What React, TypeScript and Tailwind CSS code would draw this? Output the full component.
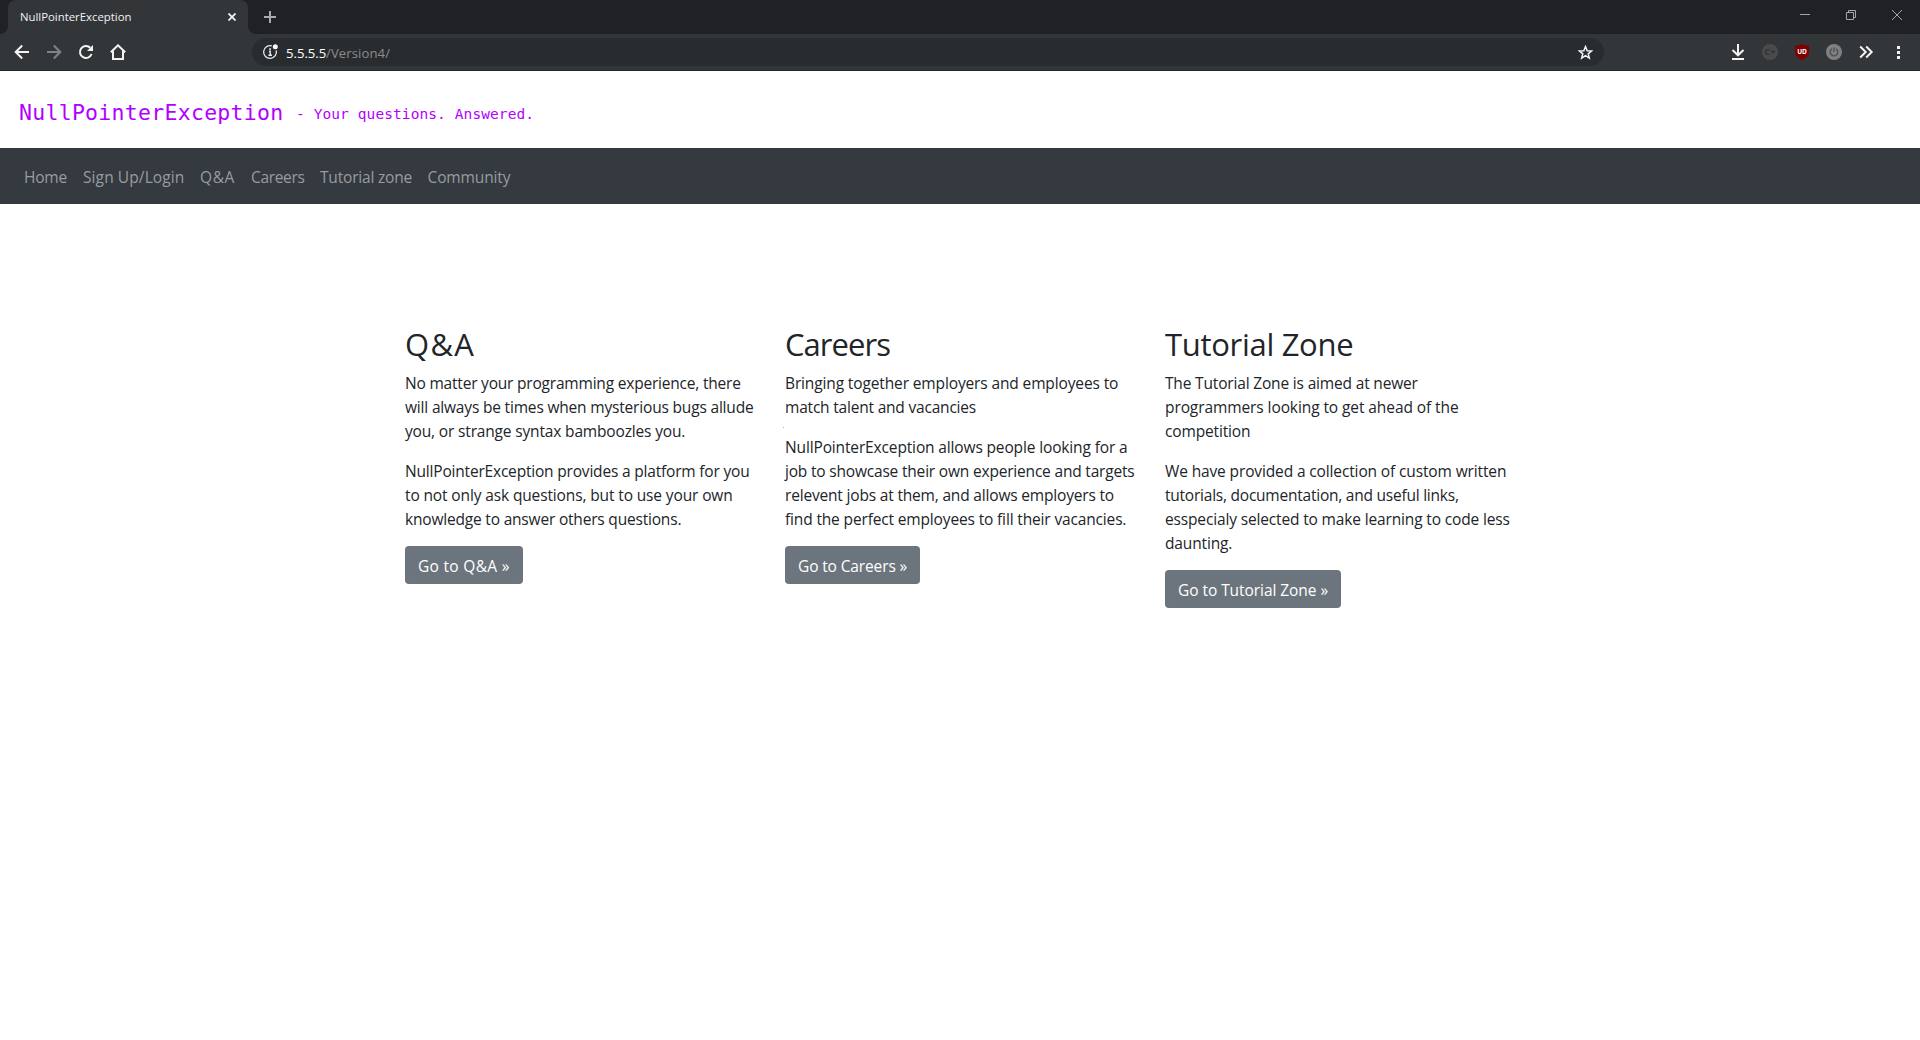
import React from 'react';

type Line = { text: string; tracking: string };
type Column = {
  title: string;
  titleTracking: string;
  paragraphs: Line[][];
  button: string;
  buttonClass: string;
};

const navItems = [
  { label: 'Home', cls: 'w-[43px] tracking-[-0.2px]' },
  { label: 'Sign Up/Login', cls: 'w-[101px] tracking-[0.1px]' },
  { label: 'Q&A', cls: 'w-[35px] tracking-[0.6px]' },
  { label: 'Careers', cls: 'w-[53px] tracking-[-0.33px]' },
  { label: 'Tutorial zone', cls: 'w-[91.5px] tracking-[-0.19px]' },
  { label: 'Community', cls: 'w-[83px] tracking-[-0.13px]' },
];

const columns: Column[] = [
  {
    title: 'Q&A',
    titleTracking: 'tracking-[1.3px]',
    paragraphs: [
      [
        { text: 'No matter your programming experience, there', tracking: 'tracking-[-0.2px]' },
        { text: 'will always be times when mysterious bugs allude', tracking: 'tracking-[-0.18px]' },
        { text: 'you, or strange syntax bamboozles you.', tracking: 'tracking-[-0.16px]' },
      ],
      [
        { text: 'NullPointerException provides a platform for you', tracking: 'tracking-[-0.19px]' },
        { text: 'to not only ask questions, but to use your own', tracking: 'tracking-[-0.13px]' },
        { text: 'knowledge to answer others questions.', tracking: 'tracking-[-0.19px]' },
      ],
    ],
    button: 'Go to Q&A »',
    buttonClass: 'w-[118px] tracking-[0.3px]',
  },
  {
    title: 'Careers',
    titleTracking: 'tracking-[-0.95px]',
    paragraphs: [
      [
        { text: 'Bringing together employers and employees to', tracking: 'tracking-[-0.13px]' },
        { text: 'match talent and vacancies', tracking: 'tracking-[-0.2px]' },
      ],
      [
        { text: 'NullPointerException allows people looking for a', tracking: 'tracking-[-0.14px]' },
        { text: 'job to showcase their own experience and targets', tracking: 'tracking-[-0.19px]' },
        { text: 'relevent jobs at them, and allows employers to', tracking: 'tracking-[-0.18px]' },
        { text: 'find the perfect employees to fill their vacancies.', tracking: 'tracking-[-0.15px]' },
      ],
    ],
    button: 'Go to Careers »',
    buttonClass: 'w-[135px] tracking-[-0.13px]',
  },
  {
    title: 'Tutorial Zone',
    titleTracking: 'tracking-[-0.3px]',
    paragraphs: [
      [
        { text: 'The Tutorial Zone is aimed at newer', tracking: 'tracking-[-0.17px]' },
        { text: 'programmers looking to get ahead of the', tracking: 'tracking-[-0.09px]' },
        { text: 'competition', tracking: 'tracking-[-0.15px]' },
      ],
      [
        { text: 'We have provided a collection of custom written', tracking: 'tracking-[-0.13px]' },
        { text: 'tutorials, documentation, and useful links,', tracking: 'tracking-[-0.23px]' },
        { text: 'esspecialy selected to make learning to code less', tracking: 'tracking-[-0.15px]' },
        { text: 'daunting.', tracking: 'tracking-[-0.15px]' },
      ],
    ],
    button: 'Go to Tutorial Zone »',
    buttonClass: 'w-[176px] tracking-[-0.06px]',
  },
];

function TabStrip() {
  return (
    <div className="flex h-[34px] items-stretch bg-[#202124]">
      <div className="flex w-2 bg-[#323639]">
        <div className="h-full w-2 rounded-br-lg bg-[#202124]" />
      </div>
      <div className="flex w-60 items-center rounded-t-lg bg-[#323639] px-3">
        <span className="flex-1 text-[11.35px] leading-4 text-[#f1f3f4]">NullPointerException</span>
        <svg width="8" height="8" viewBox="0 0 8 8">
          <path d="M0.5 0.5L7.5 7.5M7.5 0.5L0.5 7.5" stroke="#f1f3f4" strokeWidth="1.8" />
        </svg>
      </div>
      <div className="flex flex-1 bg-[#323639]">
        <div className="flex flex-1 items-center rounded-bl-lg bg-[#202124] pl-4">
          <svg width="12" height="12" viewBox="0 0 12 12">
            <path d="M6 0V12M0 6H12" stroke="#a9acaf" strokeWidth="2" />
          </svg>
          <div className="mb-1 ml-auto flex items-center gap-9 pr-[18px]">
            <svg width="10" height="10" viewBox="0 0 10 10">
              <path d="M0 4.5H10" stroke="#a6a6a8" />
            </svg>
            <svg width="10" height="10" viewBox="0 0 10 10" fill="none" stroke="#a6a6a8">
              <path d="M0.5 2.5H7.5V9.5H0.5ZM2.5 2.5V0.5H9.5V7.5H7.5" />
            </svg>
            <svg width="10" height="10" viewBox="0 0 10 10" stroke="#a6a6a8">
              <path d="M0 0L10 10M10 0L0 10" />
            </svg>
          </div>
        </div>
      </div>
    </div>
  );
}

function Toolbar() {
  return (
    <div className="flex h-[37px] items-center border-b border-[#2b2626] bg-[#323639] pl-[14px] pr-[14px]">
      <div className="flex w-[238px] items-center gap-4">
        <svg width="16" height="16" viewBox="0 0 16 16" fill="none" stroke="#f1f3f4" strokeWidth="2">
          <path d="M15 8H2.5M8.2 1.5L1.7 8L8.2 14.5" />
        </svg>
        <svg width="16" height="16" viewBox="0 0 16 16" fill="none" stroke="#808385" strokeWidth="2">
          <path d="M1 8H13.5M7.8 1.5L14.3 8L7.8 14.5" />
        </svg>
        <svg width="16" height="16" viewBox="0 0 16 16" fill="none">
          <path d="M13.6 10A6 6 0 1 1 12.3 3.8" stroke="#f1f3f4" strokeWidth="2" />
          <path d="M15 1V7H9Z" fill="#f1f3f4" />
        </svg>
        <svg width="16" height="16" viewBox="0 0 16 16" fill="none" stroke="#f1f3f4" strokeWidth="2">
          <path d="M0.8 8.2L8 1.3L15.2 8.2M3 7V15H13V7" />
        </svg>
      </div>
      <div className="flex h-7 w-[1352px] items-center rounded-full bg-[#282c2f] pl-[10px] pr-[11px]">
        <svg width="16" height="16" viewBox="0 0 16 16" fill="none">
          <path d="M14.2 6.4A6.4 6.4 0 1 1 9.8 1.9" stroke="#e8eaed" strokeWidth="1.3" />
          <path d="M7 7.2H8.2V11.2M6.4 11.2H10" stroke="#e8eaed" strokeWidth="1.4" />
          <path d="M7.2 4.2H9V5.7H7.2Z" fill="#e8eaed" />
          <circle cx="13.3" cy="2.8" r="2.5" fill="#f8f9fa" />
        </svg>
        <span className="ml-2 flex pt-0.5 text-[13.1px] leading-5">
          <span className="w-10 text-white">5.5.5.5</span>
          <span className="tracking-[0.1px] text-[#8a8d90]">/Version4/</span>
        </span>
        <svg width="15" height="15" viewBox="0 0 15 15" fill="none" className="ml-auto">
          <path
            d="M7.5 1.6L9.2 5.7L13.6 6L10.2 8.8L11.3 13.1L7.5 10.7L3.7 13.1L4.8 8.8L1.4 6L5.8 5.7Z"
            stroke="#f1f3f4"
            strokeWidth="1.5"
          />
        </svg>
      </div>
      <div className="ml-auto flex items-center gap-4">
        <svg width="16" height="16" viewBox="0 0 16 16" fill="none" stroke="#f1f3f4" strokeWidth="2">
          <path d="M8 0V11M2.5 6L8 11.3L13.5 6M2 15H14" />
        </svg>
        <div className="flex size-4 items-center justify-center rounded-full bg-[#4b4b4b] text-[9.5px] font-bold leading-none text-[#303335]">
          C+
        </div>
        <div className="relative flex size-4 items-center justify-center">
          <svg width="16" height="16" viewBox="0 0 16 16" className="absolute inset-0">
            <path
              d="M8 0C6 1.3 3.5 1.6 1 1.5V8C1 12 4.5 14.5 8 16C11.5 14.5 15 12 15 8V1.5C12.5 1.6 10 1.3 8 0Z"
              fill="#800000"
            />
          </svg>
          <span className="relative text-[6.5px] font-bold leading-none text-white">UD</span>
        </div>
        <svg width="16" height="16" viewBox="0 0 16 16" fill="none">
          <circle cx="8" cy="8" r="8" fill="#808080" />
          <path d="M5.9 4.9A3.8 3.8 0 1 0 10.1 4.9M8 3.5V8" stroke="#505254" strokeWidth="1.4" />
        </svg>
        <svg width="16" height="16" viewBox="0 0 16 16" fill="none" stroke="#f1f3f4" strokeWidth="2">
          <path d="M2.2 2.5L7.7 8L2.2 13.5M8.2 2.5L13.7 8L8.2 13.5" />
        </svg>
        <svg width="16" height="16" viewBox="0 0 16 16" fill="#f1f3f4">
          <path d="M7 2h3v3H7zM7 7h3v3H7zM7 12h3v3H7z" />
        </svg>
      </div>
    </div>
  );
}

export default function App() {
  return (
    <div className="flex h-[1040px] w-[1920px] flex-col overflow-hidden bg-white font-['Open_Sans',sans-serif]">
      <TabStrip />
      <Toolbar />
      <header className="flex h-[77px] items-baseline whitespace-pre pl-[19px] pt-[26px] font-['DejaVu_Sans_Mono',monospace] text-[#b000ff]">
        <h1 className="w-[277px] text-[21.5px] leading-8 tracking-[0.28px]">NullPointerException</h1>
        <p className="-translate-y-px text-[14.5px] tracking-[0.09px]">- Your questions. Answered.</p>
      </header>
      <nav className="flex h-14 items-center gap-4 whitespace-nowrap bg-[#343a40] pl-6 pt-0.5 text-[15.5px] leading-6 text-[#999c9f]">
        {navItems.map((item) => (
          <a key={item.label} className={item.cls}>
            {item.label}
          </a>
        ))}
      </nav>
      <main className="mx-auto flex w-[1140px] px-[15px] pt-[120px] text-[#212529]">
        {columns.map((col) => (
          <section key={col.title} className="relative w-[380px] shrink-0 whitespace-nowrap">
            <h2 className={`mb-2 pt-px text-[31px] leading-[38px] ${col.titleTracking}`}>{col.title}</h2>
            {col.paragraphs.map((lines, i) => (
              <p key={i} className="mb-4 text-[15.5px] leading-6">
                {lines.map((line) => (
                  <span key={line.text} className={`block ${line.tracking}`}>
                    {line.text}
                  </span>
                ))}
              </p>
            ))}
            <button
              className={`-mt-px flex h-[38px] items-center rounded bg-[#6c757d] pl-[13px] pt-0.5 text-[15.5px] leading-6 text-white ${col.buttonClass}`}
            >
              {col.button}
            </button>
            {col.title === 'Careers' && (
              <span className="absolute -left-0.5 top-[103px] size-px bg-[#e0a080]" />
            )}
          </section>
        ))}
      </main>
    </div>
  );
}
